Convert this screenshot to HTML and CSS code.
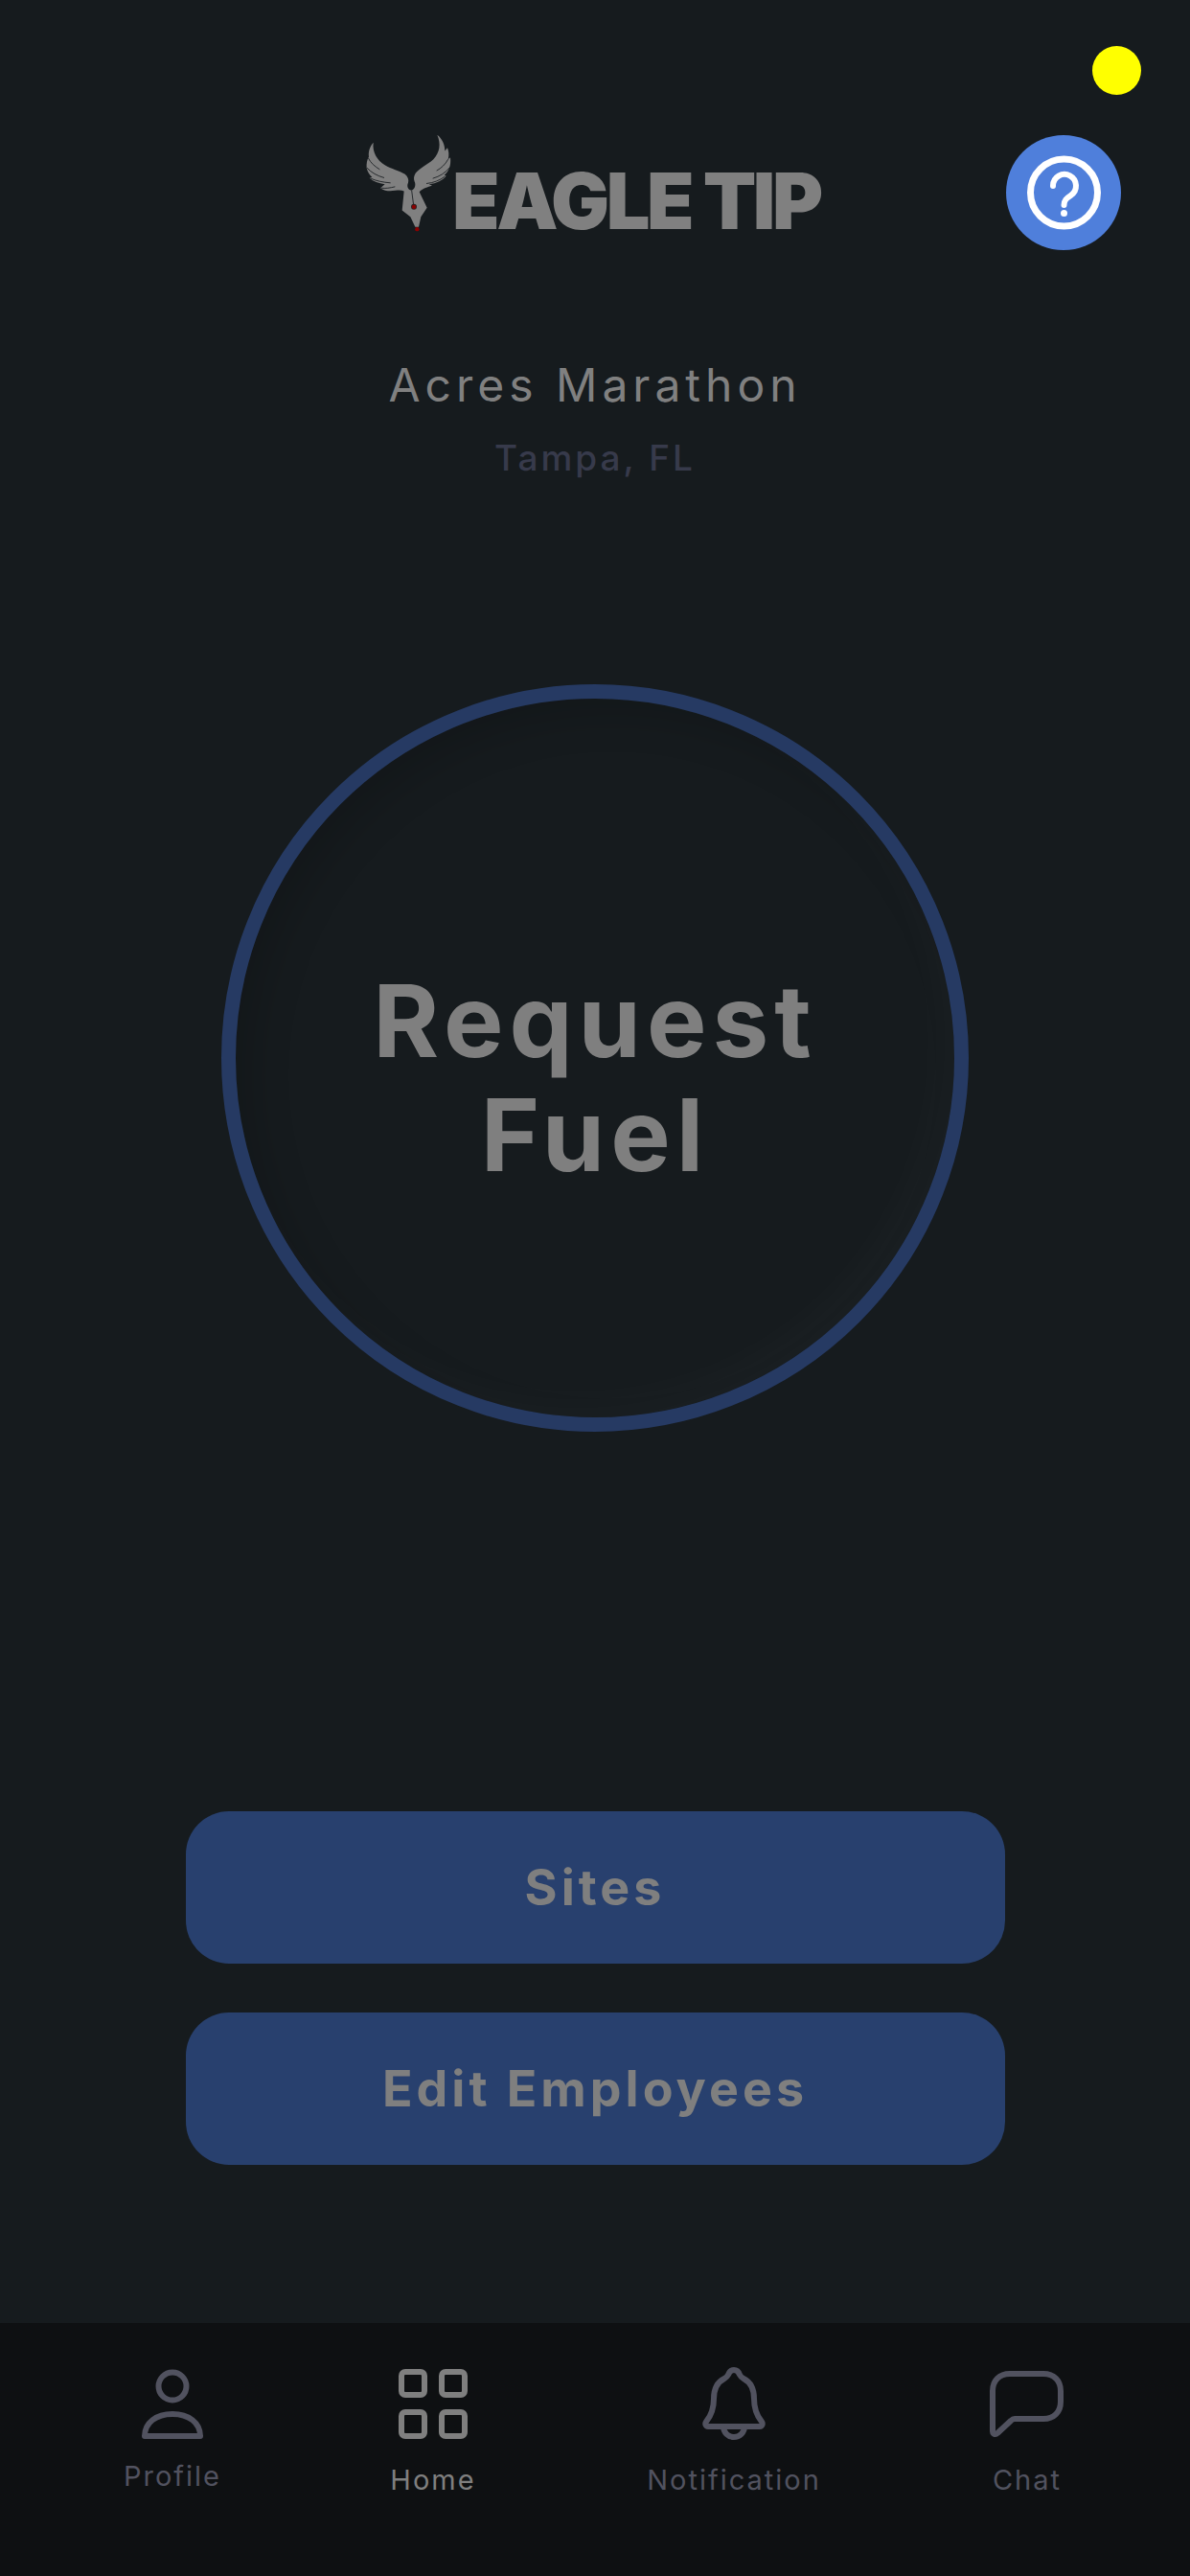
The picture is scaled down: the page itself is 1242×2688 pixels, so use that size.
FILE: index.html
```html
<html>
<head>
    <title>Eagle Tip</title>
    <link rel="stylesheet" href="styles.css">
</head>
<body>
    <div class="screen">
        <span class="dot"></span>
        <button class="help">
            <svg width="120" height="120" viewBox="0 0 120 120" fill="none" stroke="#fff" stroke-width="7">
                <circle cx="60.5" cy="60" r="35"/>
                <path d="M49 53 a12 12 0 1 1 18.500 10 c-4.500 3 -7 5 -7 10" stroke-width="6" stroke-linecap="round"/>
                <circle cx="60.500" cy="81.500" r="3.500" fill="#fff" stroke="none"/>
            </svg>
        </button>

        <div class="logo">
            <svg class="logo-mark" width="89" height="102" viewBox="65 60 267 305">
                <path fill="#808080" d="M88 86 C76 100 72 116 74 130 C68 140 66 152 67 165 C70 178 76 186 84 194 L76 197 C88 208 104 214 124 216 L110 228 C124 238 140 239 156 236 C168 234 176 234 184 238 L178 298 L204 318 L219 350 L230 350 L237 318 L256 290 L232 240 C244 228 258 226 272 220 L262 216 C286 214 306 204 316 190 L310 188 C324 176 332 158 329 132 L322 138 C326 124 324 112 320 102 L312 112 C312 94 304 74 288 62 C300 90 296 118 276 138 C256 156 232 166 220 182 C214 192 214 200 217 208 C222 218 218 232 207 236 C196 234 192 222 197 212 C200 202 196 192 186 184 C170 174 144 168 124 156 C100 142 84 116 88 86 Z"/>
                <path fill="none" stroke="#161b1e" stroke-width="2.500" d="M72 134 C80 150 92 160 108 170 M68 165 C82 180 100 190 122 196 M78 197 C96 206 118 210 142 212 M112 228 C126 230 140 228 156 224 M322 138 C314 154 300 166 286 174 M327 164 C314 180 296 192 274 198 M312 192 C296 204 276 212 254 214 M208 236 L214 282"/>
                <circle cx="215" cy="287" r="9" fill="#2c2020"/>
                <circle cx="215" cy="287" r="6.500" fill="#8b0000"/>
                <circle cx="225" cy="357" r="6.500" fill="#8b0000"/>
            </svg>
            <span class="logo-text">EAGLE TIP</span>
        </div>

        <div class="site-name">Acres Marathon</div>
        <div class="site-place">Tampa, FL</div>

        <div class="request">Request<br>Fuel</div>

        <div class="buttons">
            <button class="action">Sites</button>
            <button class="action">Edit Employees</button>
        </div>

        <div class="nav">
            <div class="nav-item">
                <svg width="80" height="80" viewBox="0 0 80 80" fill="none" stroke="#51525f" stroke-width="6" stroke-linejoin="round">
                    <circle cx="40" cy="21" r="14.500"/>
                    <path d="M11 73 H69 C69 59 57 50 40 50 S11 59 11 73 Z"/>
                </svg>
                <span class="nav-label label-profile">Profile</span>
            </div>
            <div class="nav-item nav-active">
                <svg width="80" height="80" viewBox="0 0 80 80" fill="none" stroke="#7f7f7f" stroke-width="6">
                    <rect x="7" y="6" width="24" height="24" rx="4"/>
                    <rect x="49" y="6" width="24" height="24" rx="4"/>
                    <rect x="7" y="48" width="24" height="25" rx="4"/>
                    <rect x="49" y="48" width="24" height="25" rx="4"/>
                </svg>
                <span class="nav-label">Home</span>
            </div>
            <div class="nav-item">
                <svg width="80" height="80" viewBox="0 0 80 80" fill="none" stroke="#51525f" stroke-width="6" stroke-linejoin="round">
                    <path d="M40 4 c3 0 5 2 6 5 c1 2 2 3 4 4 c8 4 11 11 11 21 c0 11 3 18 8 24 c1.500 2 .500 5 -2 5 H13 c-2.500 0 -3.500 -3 -2 -5 c5 -6 8 -13 8 -24 c0 -10 3 -17 11 -21 c2 -1 3 -2 4 -4 c1 -3 3 -5 6 -5 Z"/>
                    <path d="M29 63 a11 11 0 0 0 22 0"/>
                </svg>
                <span class="nav-label">Notification</span>
            </div>
            <div class="nav-item">
                <svg width="80" height="80" viewBox="0 0 80 80" fill="none" stroke="#51525f" stroke-width="6" stroke-linejoin="round">
                    <path d="M22 8 H57 C68 8 75 15 75 26 V37 C75 48 68 55 57 55 H27 C25 55 24 56 23 57 L9 70 C7 72 4 71 4 68 V26 C4 15 11 8 22 8 Z"/>
                </svg>
                <span class="nav-label">Chat</span>
            </div>
        </div>
    </div>
</body>
</html>
```

FILE: styles.css
```css
body {
    margin: 0;
    background-color: #161b1e;
    font-family: Inter, "Noto Sans", sans-serif;
}
.screen {
    position: relative;
    width: 1242px;
    height: 2688px;
    display: flex;
    flex-direction: column;
    align-items: center;
    overflow: hidden;
}
.dot {
    position: absolute;
    left: 1140px;
    top: 48px;
    width: 51px;
    height: 51px;
    border-radius: 50%;
    background-color: #ffff00;
}
.help {
    position: absolute;
    left: 1050px;
    top: 141px;
    width: 120px;
    height: 120px;
    padding: 0;
    border: none;
    border-radius: 50%;
    background-color: #4f7fdb;
}
.help svg {
    display: block;
}
.logo {
    display: flex;
    align-items: flex-end;
    gap: 1px;
    width: 474px;
    height: 102px;
    margin-top: 140px;
    margin-right: 4px;
}
.logo-text {
    font-size: 81px;
    line-height: 59px;
    height: 59px;
    margin-bottom: 2px;
    font-weight: 900;
    letter-spacing: -3.500px;
    color: #808080;
    white-space: nowrap;
}
.site-name {
    margin-top: 131px;
    font-size: 48px;
    line-height: 58px;
    letter-spacing: 5px;
    color: #808080;
}
.site-place {
    margin-top: 25px;
    font-size: 37px;
    font-weight: 500;
    line-height: 44px;
    letter-spacing: 3px;
    color: #373a4b;
}
.request {
    box-sizing: border-box;
    width: 780px;
    height: 780px;
    margin-top: 214px;
    padding-top: 40px;
    display: flex;
    align-items: center;
    justify-content: center;
    text-align: center;
    border: 15px solid #263a63;
    border-radius: 50%;
    box-shadow: inset 18px 18px 40px rgba(0, 0, 0, 0.14), inset -18px -18px 40px rgba(255, 255, 255, 0.025);
    font-size: 105px;
    line-height: 119px;
    font-weight: 700;
    letter-spacing: 6px;
    color: #7f7f7f;
}
.buttons {
    display: flex;
    flex-direction: column;
    gap: 51px;
    margin-top: 396px;
}
.action {
    width: 855px;
    height: 159px;
    border: none;
    border-radius: 45px;
    background-color: #28406e;
    font-family: Inter, "Noto Sans", sans-serif;
    font-size: 52px;
    font-weight: 700;
    letter-spacing: 4px;
    color: #7f7f7f;
}
.nav {
    box-sizing: border-box;
    width: 100%;
    height: 264px;
    margin-top: 165px;
    padding: 45px 132px 0;
    display: grid;
    grid-template-columns: 96px 92px 180px 76px;
    justify-content: space-between;
    background-color: #0e1012;
}
.nav-item {
    display: flex;
    flex-direction: column;
    align-items: center;
}
.nav-item svg {
    display: block;
    flex-shrink: 0;
}
.nav-label {
    margin-top: 22px;
    font-size: 29px;
    line-height: 34px;
    letter-spacing: 2px;
    white-space: nowrap;
    color: #51525f;
}
.label-profile {
    margin-top: 18px;
}
.nav-active .nav-label {
    color: #7f7f7f;
}
```
